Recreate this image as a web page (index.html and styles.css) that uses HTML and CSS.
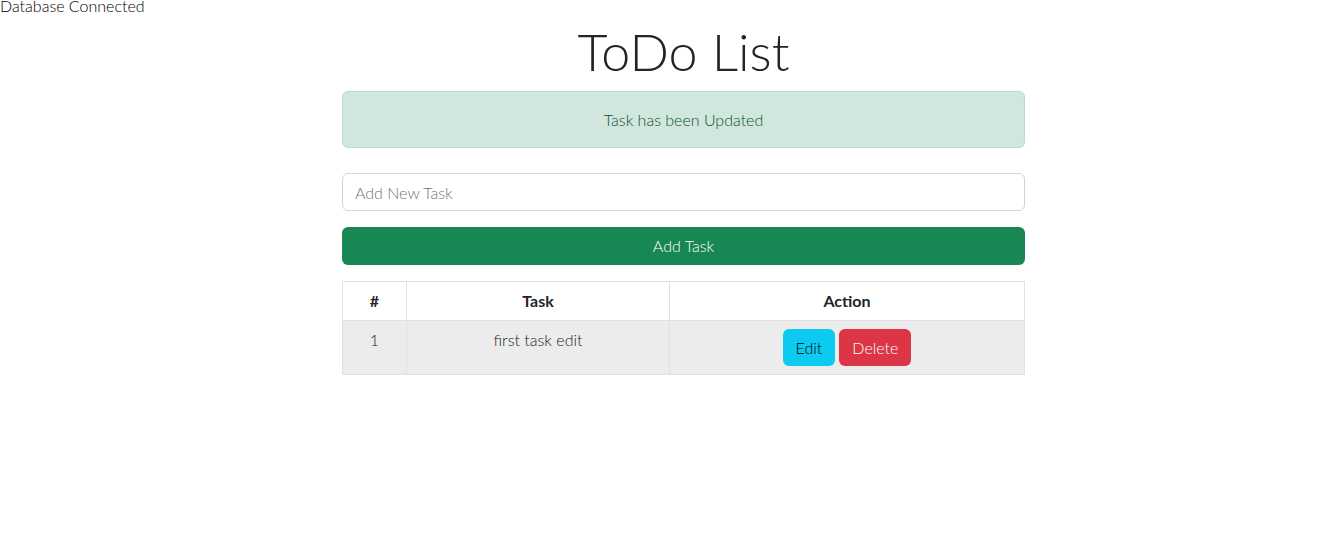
FILE: index.html
```html
<!DOCTYPE html>
<html lang="en">
<head>
<meta charset="utf-8">
<title>ToDo List</title>
<link rel="stylesheet" href="styles.css">
</head>
<body>
<div class="status">Database Connected</div>
<main class="wrap">
  <h1 class="title">ToDo List</h1>
  <div class="alert">Task has been Updated</div>
  <form class="task-form">
    <input class="task-input" type="text" placeholder="Add New Task">
    <button class="btn btn-add" type="button">Add Task</button>
  </form>
  <table class="tasks">
    <thead>
      <tr><th class="col-num">#</th><th class="col-task">Task</th><th>Action</th></tr>
    </thead>
    <tbody>
      <tr>
        <td>1</td>
        <td>first task edit</td>
        <td><div class="actions"><button class="btn btn-edit" type="button">Edit</button><button class="btn btn-delete" type="button">Delete</button></div></td>
      </tr>
    </tbody>
  </table>
</main>
</body>
</html>
```
FILE: styles.css
```css
* { box-sizing: border-box; }
body {
  margin: 0;
  font-family: Lato, "Open Sans", sans-serif;
  font-weight: 300;
  font-size: 16px;
  line-height: 1.5;
  color: #212529;
  background: #fff;
}
.status {
  line-height: 14px;
  height: 12px;
  color: #000;
  margin-top: -1px;
}
.wrap {
  width: 683px;
  margin-left: 342px;
}
.title {
  margin: 8px 0 8px;
  font-size: 52px;
  font-weight: 300;
  line-height: 64px;
  height: 64px;
  text-align: center;
}
.alert {
  background: #d1e7dd;
  border: 1px solid #badbcc;
  color: #0f5132;
  border-radius: 6px;
  padding: 16px;
  text-align: center;
  height: 57px;
}
.task-form {
  margin-top: 25px;
  display: flex;
  flex-direction: column;
  gap: 16px;
}
.task-input {
  height: 38px;
  border: 1px solid #ced4da;
  border-radius: 6px;
  padding: 6px 12px;
  font: inherit;
  color: #212529;
}
.task-input::placeholder { color: #6c757d; }
.btn {
  font: inherit;
  border: 1px solid transparent;
  border-radius: 6px;
  padding: 5px 12px;
  cursor: pointer;
}
.btn-add {
  height: 38px;
  background: #198754;
  color: #fff;
}
.tasks {
  margin-top: 16px;
  width: 100%;
  border-collapse: collapse;
  text-align: center;
}
.tasks th, .tasks td {
  border: 1px solid #dee2e6;
  padding: 7px 8px;
  vertical-align: top;
}
.tasks th { font-weight: 700; height: 37px; }
.col-num { width: 64px; }
.col-task { width: 263px; }
.tasks tbody tr { background: #ececec; }
.tasks td { height: 54px; }
.actions {
  display: flex;
  justify-content: center;
  gap: 4px;
  padding-top: 1px;
}
.btn-edit { background: #0dcaf0; color: #000; height: 37px; }
.btn-delete { background: #dc3545; color: #fff; height: 37px; }
```
